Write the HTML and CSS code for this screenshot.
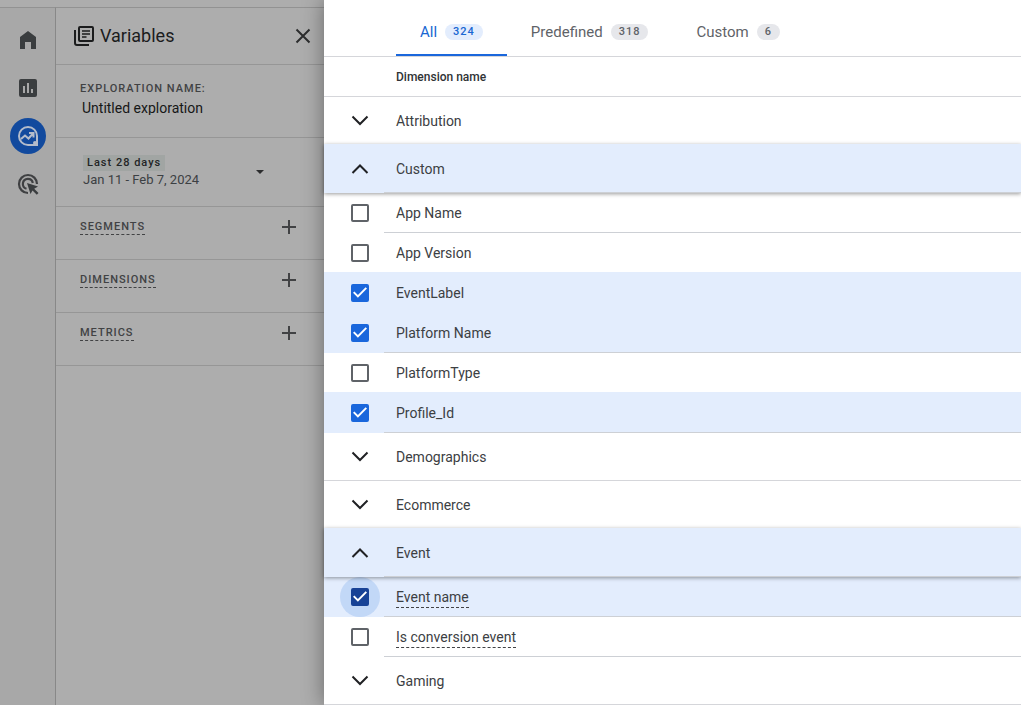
FILE: index.html
```html
<!DOCTYPE html>
<html lang="en">
<head>
    <meta charset="UTF-8">
    <meta name="viewport" content="width=device-width, initial-scale=1.0">
    <title>Explorations</title>
    <link rel="stylesheet" href="styles.css">
</head>
<body>
    <div class="app">
        <div class="background">
            <nav class="rail">
                <a href="#" aria-label="Home">
                    <svg width="24" height="24" viewBox="0 0 24 24"><path d="M4 21V9l8-6 8 6v12h-5v-7H9v7z"/></svg>
                </a>
                <a href="#" aria-label="Reports">
                    <svg width="24" height="24" viewBox="0 0 24 24"><path fill-rule="evenodd" d="M5 3h14a2 2 0 0 1 2 2v14a2 2 0 0 1-2 2H5a2 2 0 0 1-2-2V5a2 2 0 0 1 2-2zm2 7v7h2v-7zm4-3v10h2V7zm4 6v4h2v-4z"/></svg>
                </a>
                <a href="#" class="active" aria-label="Explore">
                    <svg width="24" height="24" viewBox="0 0 24 24"><path fill="none" stroke="#b4bccb" stroke-width="2" d="M21 21h-9a9 9 0 1 1 9-9z"/><path fill="none" stroke="#b4bccb" stroke-width="2" d="M5 15l4-3.500 3.500 3L17 9.500M13 9h4.500v4.500"/><circle cx="19" cy="19" r="2" fill="#b4bccb"/></svg>
                </a>
                <a href="#" aria-label="Advertising">
                    <svg width="24" height="24" viewBox="0 0 24 24"><path fill="none" stroke="#3f4042" stroke-width="2.200" d="M12 21a9 9 0 1 1 9-9M10.500 16.700a5 5 0 1 1 6.300-5.700"/><path d="M11 11l11 3.500-3.800 2.200 4.300 4.300-1.700 1.700-4.300-4.300-2 3.600z"/></svg>
                </a>
            </nav>
            <section class="variables">
                <header class="variables-header">
                    <svg width="24" height="24" viewBox="0 0 24 24"><path fill="none" stroke="#1b1c1d" stroke-width="2" d="M3 6v13a2 2 0 0 0 2 2h12"/><rect x="7" y="3" width="14" height="14" rx="1" fill="none" stroke="#1b1c1d" stroke-width="2"/><path fill="none" stroke="#1b1c1d" stroke-width="1.600" d="M10 7h8M10 10h8M10 13h4.500"/></svg>
                    <h1>Variables</h1>
                    <button class="icon-button" aria-label="Close">
                        <svg width="24" height="24" viewBox="0 0 24 24"><path fill="none" stroke="#2c2d2e" stroke-width="2" d="M5.500 5.500l13 13M18.500 5.500l-13 13"/></svg>
                    </button>
                </header>
                <div class="exploration">
                    <label class="caption" for="exploration-name">EXPLORATION NAME:</label>
                    <input type="text" id="exploration-name" value="Untitled exploration">
                </div>
                <button class="date-range">
                    <span class="dates">
                        <span class="preset">Last 28 days</span>
                        <span>Jan 11 - Feb 7, 2024</span>
                    </span>
                    <svg width="8" height="4" viewBox="0 0 8 4"><path d="M0 0h8L4 4z"/></svg>
                </button>
                <div class="variable">
                    <span class="caption hint">SEGMENTS</span>
                    <button class="icon-button" aria-label="Add segment"><svg width="16" height="16" viewBox="0 0 16 16"><path fill="none" stroke="#414244" stroke-width="2" d="M8 1v14M1 8h14"/></svg></button>
                </div>
                <div class="variable">
                    <span class="caption hint">DIMENSIONS</span>
                    <button class="icon-button" aria-label="Add dimension"><svg width="16" height="16" viewBox="0 0 16 16"><path fill="none" stroke="#414244" stroke-width="2" d="M8 1v14M1 8h14"/></svg></button>
                </div>
                <div class="variable">
                    <span class="caption hint">METRICS</span>
                    <button class="icon-button" aria-label="Add metric"><svg width="16" height="16" viewBox="0 0 16 16"><path fill="none" stroke="#414244" stroke-width="2" d="M8 1v14M1 8h14"/></svg></button>
                </div>
            </section>
        </div>

        <main class="dialog">
            <div class="tabs" role="tablist">
                <button class="tab selected" role="tab" aria-selected="true">All <span class="count">324</span></button>
                <button class="tab" role="tab" aria-selected="false">Predefined <span class="count">318</span></button>
                <button class="tab" role="tab" aria-selected="false">Custom <span class="count">6</span></button>
            </div>
            <h2 class="column-title">Dimension name</h2>

            <button class="group" aria-expanded="false">
                <svg width="24" height="24" viewBox="0 0 24 24"><path d="M4.500 7.500l7.500 7.500 7.500-7.500"/></svg>
                Attribution
            </button>
            <button class="group expanded" aria-expanded="true">
                <svg width="24" height="24" viewBox="0 0 24 24"><path d="M4.500 16l7.500-7.500 7.500 7.500"/></svg>
                <span class="group-name">Custom</span>
            </button>
            <label class="dimension"><input type="checkbox"><span class="name">App Name</span></label>
            <label class="dimension"><input type="checkbox"><span class="name">App Version</span></label>
            <label class="dimension checked"><input type="checkbox" checked><span class="name">EventLabel</span></label>
            <label class="dimension checked"><input type="checkbox" checked><span class="name">Platform Name</span></label>
            <label class="dimension"><input type="checkbox"><span class="name">PlatformType</span></label>
            <label class="dimension checked"><input type="checkbox" checked><span class="name">Profile_Id</span></label>
            <button class="group" aria-expanded="false">
                <svg width="24" height="24" viewBox="0 0 24 24"><path d="M4.500 7.500l7.500 7.500 7.500-7.500"/></svg>
                Demographics
            </button>
            <button class="group" aria-expanded="false">
                <svg width="24" height="24" viewBox="0 0 24 24"><path d="M4.500 7.500l7.500 7.500 7.500-7.500"/></svg>
                Ecommerce
            </button>
            <button class="group expanded" aria-expanded="true">
                <svg width="24" height="24" viewBox="0 0 24 24"><path d="M4.500 16l7.500-7.500 7.500 7.500"/></svg>
                <span class="group-name">Event</span>
            </button>
            <label class="dimension checked focused"><input type="checkbox" checked><span class="name"><span class="hint">Event name</span></span></label>
            <label class="dimension"><input type="checkbox"><span class="name"><span class="hint">Is conversion event</span></span></label>
            <button class="group" aria-expanded="false">
                <svg width="24" height="24" viewBox="0 0 24 24"><path d="M4.500 7.500l7.500 7.500 7.500-7.500"/></svg>
                Gaming
            </button>
        </main>
    </div>
</body>
</html>
```
FILE: styles.css
```css
* {
    box-sizing: border-box;
}

body {
    margin: 0;
    font-family: Roboto, "Liberation Sans", sans-serif;
    font-size: 14px;
    color: #3c4043;
    background-color: #adadad;
}

button,
input {
    margin: 0;
    padding: 0;
    border: none;
    background: none;
    font: inherit;
    color: inherit;
}

button {
    cursor: pointer;
}

svg {
    display: block;
    flex-shrink: 0;
}

.app {
    display: flex;
    min-height: 100vh;
}

/* Dimmed page on the left */
.background {
    display: flex;
    width: 324px;
    padding-top: 7px;
    background-color: #adadad;
}

.rail {
    display: flex;
    flex-direction: column;
    align-items: center;
    gap: 12px;
    width: 56px;
    padding-top: 14px;
    border-top: 1px solid #929292;
    border-right: 1px solid #888888;
    background-color: #a8a8a8;
}

.rail a {
    display: flex;
    align-items: center;
    justify-content: center;
    width: 36px;
    height: 36px;
    border-radius: 50%;
    fill: #3a3d3f;
}

.rail a.active {
    background-color: #124a9e;
}

.variables {
    flex: 1;
    border-top: 1px solid #929292;
}

.variables-header {
    display: flex;
    align-items: center;
    gap: 4px;
    height: 57px;
    padding: 0 9px 0 16px;
    border-bottom: 1px solid #969696;
}

.variables-header h1 {
    flex: 1;
    margin: 0;
    font-size: 18px;
    font-weight: 400;
    line-height: 24px;
    color: #1b1c1d;
}

.icon-button {
    display: flex;
}

.caption {
    font-size: 11px;
    font-weight: 500;
    line-height: 14px;
    letter-spacing: 1px;
    color: #414244;
}

.exploration {
    display: flex;
    flex-direction: column;
    gap: 5px;
    height: 73px;
    padding: 17px 24px;
    border-bottom: 1px solid #969696;
}

.exploration input {
    height: 14px;
    padding: 0 2px;
    color: #161717;
}

.date-range {
    display: flex;
    align-items: center;
    justify-content: space-between;
    width: 100%;
    height: 69px;
    padding: 0 60px 0 27px;
    border-bottom: 1px solid #969696;
    text-align: left;
    fill: #2c2d2e;
}

.dates {
    display: flex;
    flex-direction: column;
    align-items: flex-start;
    font-size: 13px;
    line-height: 18px;
}

.preset {
    padding: 0 4px;
    font-size: 11px;
    font-weight: 500;
    line-height: 16px;
    letter-spacing: 1px;
    color: #232526;
    background-color: #a1a5a3;
}

.variable {
    display: flex;
    align-items: flex-start;
    justify-content: space-between;
    height: 53px;
    padding: 12px 27px 0 24px;
    border-bottom: 1px solid #969696;
}

.variable .caption {
    line-height: 15px;
}

.hint {
    border-bottom: 1px dashed #414244;
}

/* Dimension picker */
.dialog {
    flex: 1;
    display: flex;
    flex-direction: column;
    z-index: 1;
    background-color: #ffffff;
    box-shadow: 0 0 20px rgba(0, 0, 0, 0.4);
}

.tabs {
    display: flex;
    height: 57px;
    padding: 10px 0 0 72px;
    border-bottom: 1px solid #d5d6da;
}

.tab {
    display: flex;
    align-items: center;
    gap: 8px;
    padding: 0 24px;
    border-bottom: 2px solid transparent;
    font-size: 15px;
    color: #5f6368;
}

.tab.selected {
    color: #1967d2;
    border-bottom-color: #1a67dc;
}

.count {
    padding: 0 8px;
    border-radius: 8px;
    font-size: 11px;
    font-weight: 500;
    line-height: 16px;
    letter-spacing: 1px;
    background-color: #e6e7eb;
}

.selected .count {
    background-color: #e3edfd;
}

.column-title {
    margin: 0;
    padding: 1px 0 0 72px;
    border-bottom: 1px solid #d5d6da;
    font-size: 12px;
    font-weight: 500;
    line-height: 38px;
    color: #303336;
}

.group {
    display: flex;
    align-items: center;
    gap: 24px;
    height: 48px;
    padding-left: 24px;
    border-bottom: 1px solid #d5d6da;
}

.group svg {
    fill: none;
    stroke: #202124;
    stroke-width: 2;
}

.group.expanded {
    z-index: 1;
    gap: 12px;
    height: 49px;
    margin-top: -1px;
    border-bottom: none;
    background-color: #e3edfd;
    box-shadow: 0 1px 4px rgba(0, 0, 0, 0.4);
}

.group-name,
.name {
    display: flex;
    flex: 1;
    align-items: center;
    height: 100%;
    padding-left: 12px;
    border-bottom: 1px solid #cdd0d5;
}

.group-name,
.checked .name {
    padding-top: 2px;
}

.name .hint {
    padding: 3px 0 2px;
}

.dimension {
    display: flex;
    align-items: center;
    gap: 15px;
    height: 40px;
    padding-left: 27px;
}

/* Covers the divider of the row above */
.dimension.checked {
    z-index: 0;
    height: 41px;
    margin-top: -1px;
    background-color: #e3edfd;
}

.dimension input {
    appearance: none;
    display: grid;
    width: 18px;
    height: 18px;
    border: 2px solid #5f6368;
    border-radius: 2px;
}

.dimension input:checked {
    border-color: #1a67dc;
    background-color: #1a67dc;
}

.dimension input:checked::before {
    content: "";
    background-color: #ffffff;
    clip-path: polygon(0% 52%, 10% 42%, 35% 67%, 90% 12%, 100% 22%, 35% 87%);
}

.dimension.focused input {
    position: relative;
    border-color: #174296;
    background-color: #174296;
}

/* Focus ripple round the checkbox */
.dimension.focused input::after {
    content: "";
    position: absolute;
    inset: -13px;
    z-index: -1;
    border-radius: 50%;
    background-color: rgba(26, 103, 220, 0.16);
}
```
